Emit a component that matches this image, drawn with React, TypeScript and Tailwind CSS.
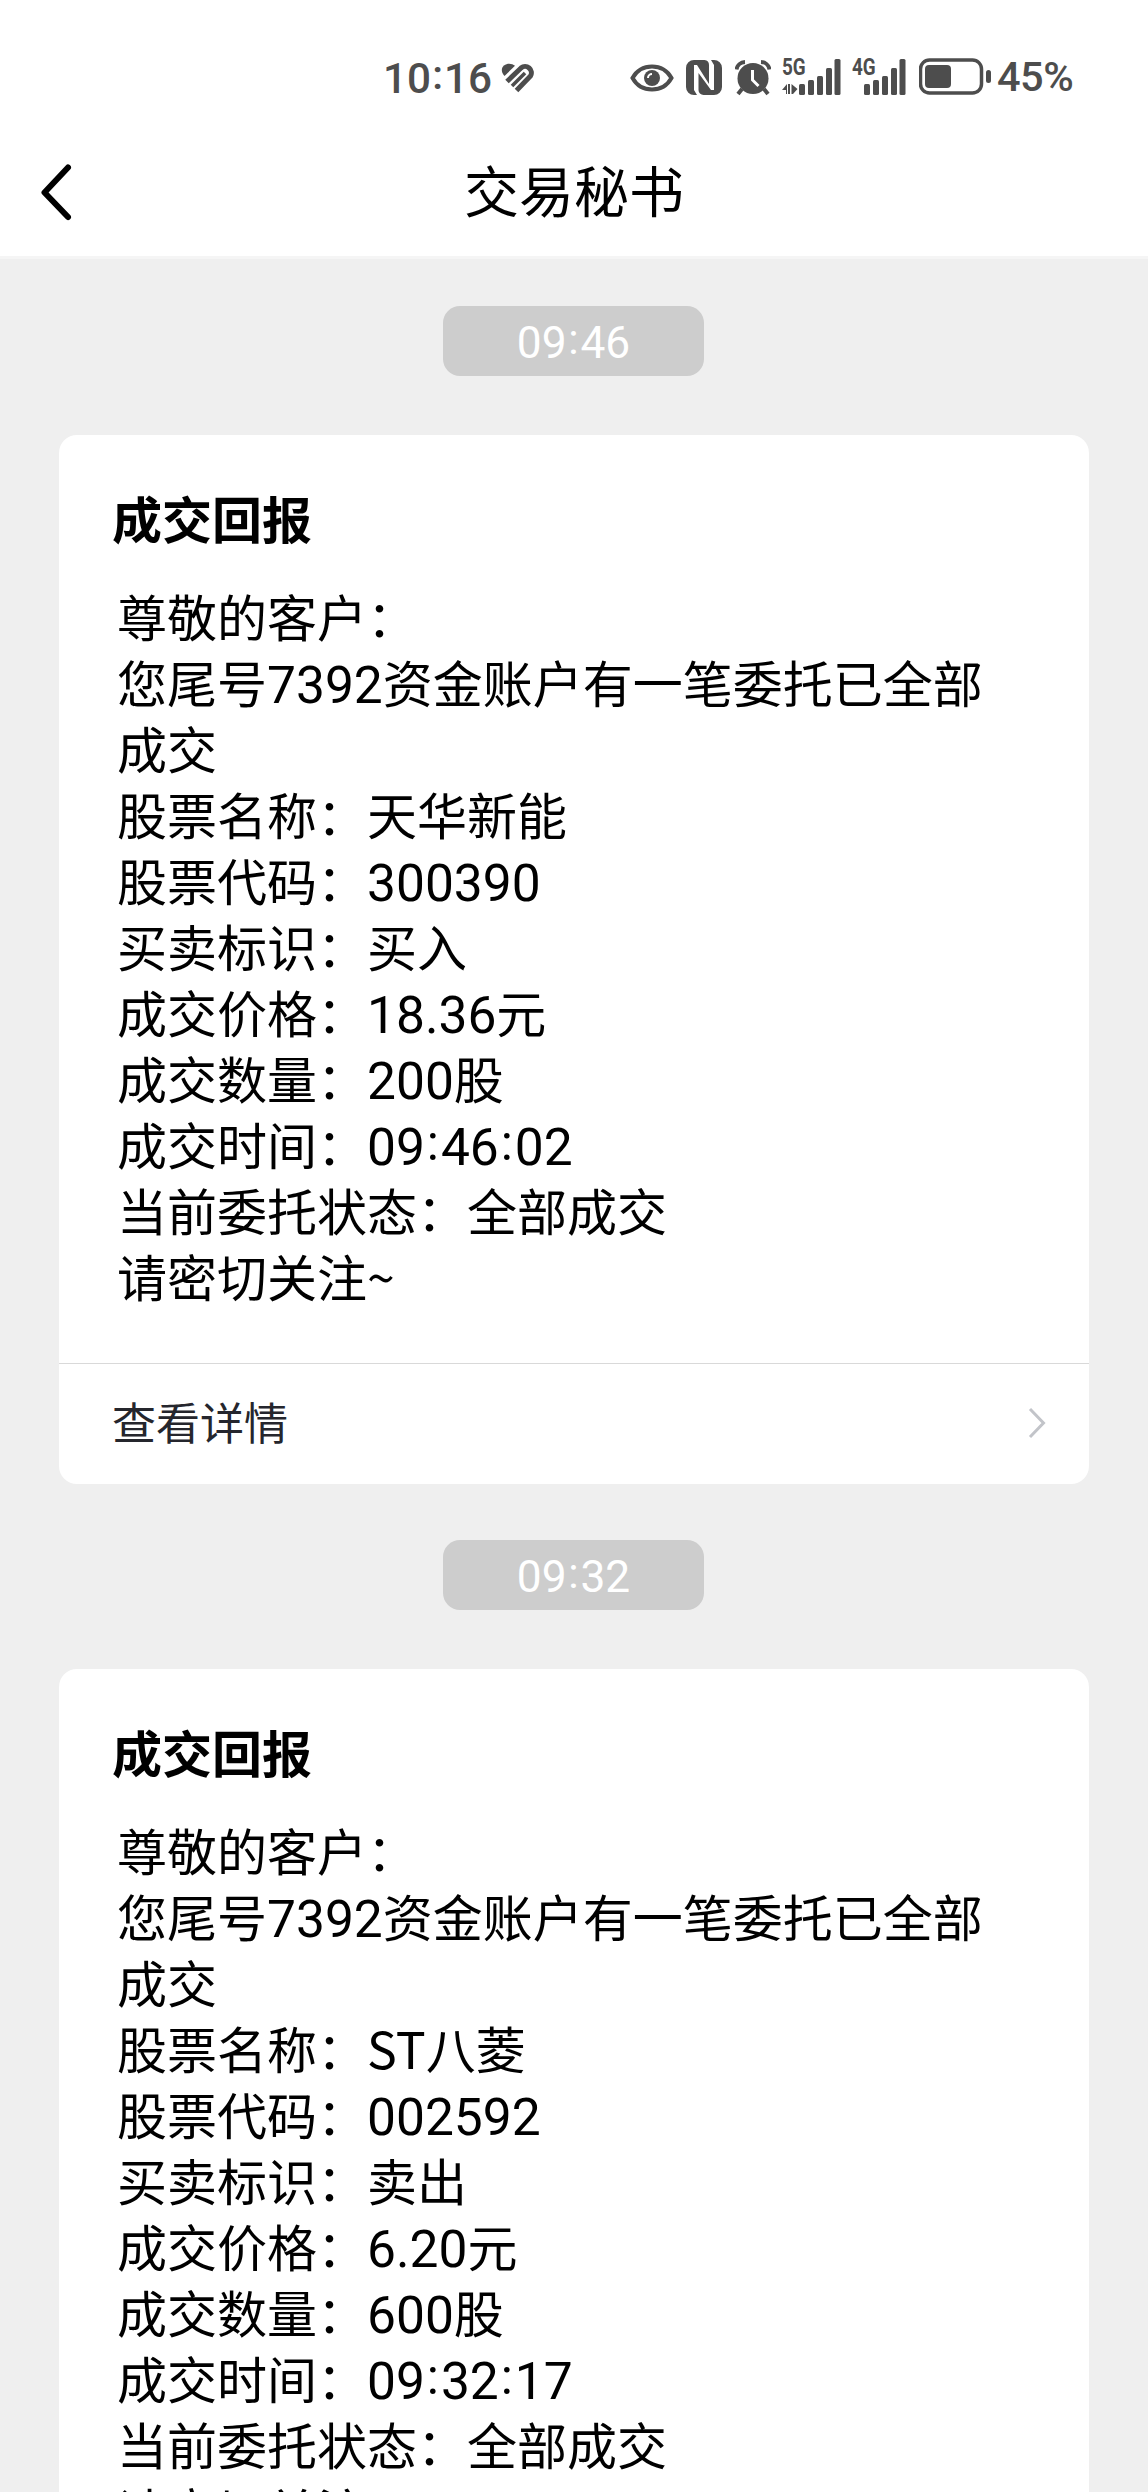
type Message = {
  time: string;
  title: string;
  lines: string[];
};

const messages: Message[] = [
  {
    time: "09:46",
    title: "成交回报",
    lines: [
      "尊敬的客户：",
      "您尾号7392资金账户有一笔委托已全部成交",
      "股票名称：天华新能",
      "股票代码：300390",
      "买卖标识：买入",
      "成交价格：18.36元",
      "成交数量：200股",
      "成交时间：09:46:02",
      "当前委托状态：全部成交",
      "请密切关注~",
    ],
  },
  {
    time: "09:32",
    title: "成交回报",
    lines: [
      "尊敬的客户：",
      "您尾号7392资金账户有一笔委托已全部成交",
      "股票名称：ST八菱",
      "股票代码：002592",
      "买卖标识：卖出",
      "成交价格：6.20元",
      "成交数量：600股",
      "成交时间：09:32:17",
      "当前委托状态：全部成交",
      "请密切关注~",
    ],
  },
];

// Digits use Roboto, slightly larger than the Chinese text; colons are raised to the middle of the digits
function Mixed({ text }: { text: string }) {
  return (
    <>
      {text.split(/([0-9.]+|:)/).map((part, i) => {
        if (part === ":") {
          return (
            <span key={i} className="relative -top-[0.1em] inline-block w-[0.32em] text-center font-['Roboto'] leading-none">
              :
            </span>
          );
        }
        if (i % 2 === 1) {
          return (
            <span key={i} className="font-['Roboto'] text-[1.03em] leading-none">
              {part}
            </span>
          );
        }
        return part;
      })}
    </>
  );
}

function SignalBars() {
  return (
    <svg width="42" height="38" viewBox="0 0 42 38" fill="currentColor">
      <rect x="0" y="26" width="6" height="11" rx="1.500" />
      <rect x="9" y="22" width="6" height="15" rx="1.500" />
      <rect x="18" y="18" width="6" height="19" rx="1.500" />
      <rect x="27" y="10" width="6" height="27" rx="1.500" />
      <rect x="35.500" y="1" width="6" height="36" rx="1.500" />
    </svg>
  );
}

function StatusBar() {
  return (
    <div className="flex h-[130px] items-start pt-[58px] pl-[383px] text-[#4d4d4d]">
      <div className="w-[118px] font-['Roboto'] text-[41px] leading-[38px] font-medium whitespace-nowrap">
        <Mixed text="10:16" />
      </div>
      <svg className="mr-[95px]" width="34" height="38" viewBox="0 0 34 38" fill="none" stroke="currentColor">
        <path d="M3.500 18C0 14 0 10 3 7.500C6.500 5 11 5.500 14 7.800z" fill="currentColor" stroke="none" />
        <path d="M6 23.500L20 10A6.300 6.300 0 0 1 29.500 18L15.500 32.500" strokeWidth="5" />
        <path d="M11 28L24 15" strokeWidth="3.600" />
      </svg>
      <svg className="mr-3" width="44" height="38" viewBox="0 0 44 38" fill="none">
        <path d="M2.500 20C7 12 14 8.500 22 8.500S37 12 41.500 20C37 28 30 31.500 22 31.500S7 28 2.500 20z" stroke="currentColor" strokeWidth="4" />
        <circle cx="22" cy="20" r="8" fill="currentColor" />
        <path d="M18 20a4 4 0 0 1 4-4" stroke="white" strokeWidth="2" />
      </svg>
      <svg className="mr-[13px]" width="36" height="38" viewBox="0 0 36 38">
        <path d="M8 2h10.500a5 5 0 0 1 4.500 5v19L11 7H8v25l3 5H8a8 8 0 0 1-8-8V10a8 8 0 0 1 8-8z" fill="currentColor" />
        <path d="M28 37H17.500a5 5 0 0 1-5-5V15L25 32h3V7l-3-5h3a8 8 0 0 1 8 8v19a8 8 0 0 1-8 8z" fill="currentColor" />
      </svg>
      <svg className="mr-[11px]" width="36" height="38" viewBox="0 0 36 38" fill="none" stroke="currentColor">
        <circle cx="18" cy="20.500" r="15.500" fill="currentColor" stroke="none" />
        <path d="M1.500 11.500A9 9 0 0 1 10 4M34.500 11.500A9 9 0 0 0 26 4" strokeWidth="4" />
        <path d="M7 31l-4 5M29 31l4 5" strokeWidth="4" />
        <path d="M17.500 12v10l6 6" stroke="white" strokeWidth="3" />
      </svg>
      <div className="flex w-[17px] flex-col">
        <span className="h-[25px] origin-left scale-x-[0.82] font-['Roboto'] text-[23px] leading-[20px] font-bold">5G</span>
        <svg width="16" height="12" viewBox="0 0 16 12" fill="currentColor">
          <path d="M0 7L5 1V11H4V7zM6 1h2v10H6zM9.500 1L15.500 6L11 11H9.500z" />
        </svg>
      </div>
      <SignalBars />
      <span className="ml-[11px] h-[20px] w-[12px] origin-left scale-x-[0.82] font-['Roboto'] text-[23px] leading-[20px] font-bold">4G</span>
      <SignalBars />
      <svg className="mr-[6px] ml-[13px]" width="72" height="38" viewBox="0 0 72 38" fill="none">
        <rect x="1.500" y="2" width="61" height="33" rx="9" stroke="currentColor" strokeWidth="3.500" />
        <rect x="6" y="7" width="26" height="23" rx="4" fill="currentColor" />
        <rect x="67" y="12" width="5" height="13" rx="2.500" fill="currentColor" />
      </svg>
      <div className="font-['Roboto'] text-[41.500px] leading-[38px] font-medium tracking-[-0.5px]">45%</div>
    </div>
  );
}

function Header() {
  return (
    <header className="grid h-[126px] grid-cols-[1fr_auto_1fr] items-center bg-white">
      <svg className="mb-[2px] ml-9" width="40" height="64" viewBox="0 0 40 64" fill="none" stroke="black" strokeWidth="6" strokeLinecap="round" strokeLinejoin="round">
        <path d="M32 7.500L8.500 32.500L32 57" />
      </svg>
      <h1 className="mb-[9px] text-[55px] leading-none">交易秘书</h1>
    </header>
  );
}

function TimePill({ time }: { time: string }) {
  return (
    <div className="ml-[443px] flex h-[70px] w-[261px] items-center justify-center rounded-[17px] bg-[#cdcdcd] pb-[3px] text-[43px] text-white">
      <div>
        <Mixed text={time} />
      </div>
    </div>
  );
}

function MessageCard({ message }: { message: Message }) {
  return (
    <article className="mx-[59px] h-[1049px] rounded-[18px] bg-white">
      <div className="h-[928px] pt-[49px] pl-[53px]">
        <h2 className="text-[50px] leading-[66px] font-bold">{message.title}</h2>
        <div className="mt-8 ml-[5px] w-[880px] text-[50px] leading-[66px] break-all">
          {message.lines.map((line) => (
            <p key={line}>
              <Mixed text={line} />
            </p>
          ))}
        </div>
      </div>
      <div className="flex h-[121px] items-center justify-between border-t border-[#d9d9d9] pr-[42px] pb-[2px] pl-[53px] text-[44px] text-[#25262d]">
        <span className="mb-[5px] leading-none">查看详情</span>
        <svg width="20" height="32" viewBox="0 0 20 32" fill="none" stroke="#c2c4c9" strokeWidth="3">
          <path d="M3 2L16.500 16L3 30" />
        </svg>
      </div>
    </article>
  );
}

export default function App() {
  return (
    <div className="h-[2492px] overflow-hidden bg-[#efefef] font-['Noto_Sans_CJK_SC',sans-serif] text-black">
      <div className="border-b-[3px] border-[#f5f5f5] bg-white">
        <StatusBar />
        <Header />
      </div>
      <main className="pt-[47px]">
        {messages.map((message) => (
          <section key={message.time} className="mb-14">
            <TimePill time={message.time} />
            <div className="h-[59px]" />
            <MessageCard message={message} />
          </section>
        ))}
      </main>
    </div>
  );
}
